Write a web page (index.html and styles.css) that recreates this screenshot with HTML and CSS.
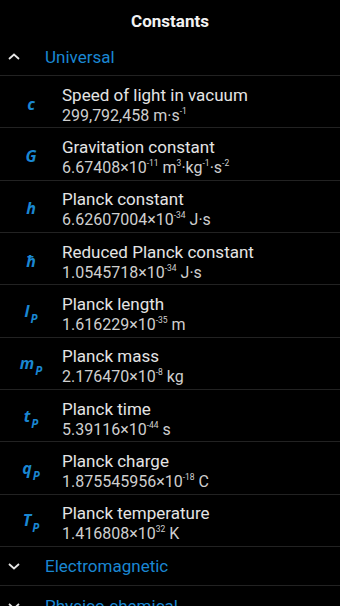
FILE: index.html
```html
<!DOCTYPE html>
<html>
<head>
<meta charset="utf-8">
<link rel="stylesheet" href="styles.css">
</head>
<body>
<div class="app">
  <div class="titlebar">Constants</div>
  <div class="group">
    <svg class="chev" width="14" height="10" viewBox="0 0 14 10"><polyline points="2,7 7,2.5 12,7" fill="none" stroke="#e6e6e6" stroke-width="1.8"/></svg>
    <span class="gname">Universal</span>
  </div>
  <div class="row">
    <div class="sym">c</div>
    <div class="txt"><div class="name">Speed of light in vacuum</div><div class="val">299,792,458 m·s<sup>-1</sup></div></div>
  </div>
  <div class="row">
    <div class="sym">G</div>
    <div class="txt"><div class="name">Gravitation constant</div><div class="val">6.67408×10<sup>-11</sup> m<sup>3</sup>·kg<sup>-1</sup>·s<sup>-2</sup></div></div>
  </div>
  <div class="row">
    <div class="sym">h</div>
    <div class="txt"><div class="name">Planck constant</div><div class="val">6.62607004×10<sup>-34</sup> J·s</div></div>
  </div>
  <div class="row">
    <div class="sym">ħ</div>
    <div class="txt"><div class="name">Reduced Planck constant</div><div class="val">1.0545718×10<sup>-34</sup> J·s</div></div>
  </div>
  <div class="row">
    <div class="sym">l<sub>P</sub></div>
    <div class="txt"><div class="name">Planck length</div><div class="val">1.616229×10<sup>-35</sup> m</div></div>
  </div>
  <div class="row">
    <div class="sym">m<sub>P</sub></div>
    <div class="txt"><div class="name">Planck mass</div><div class="val">2.176470×10<sup>-8</sup> kg</div></div>
  </div>
  <div class="row">
    <div class="sym">t<sub>P</sub></div>
    <div class="txt"><div class="name">Planck time</div><div class="val">5.39116×10<sup>-44</sup> s</div></div>
  </div>
  <div class="row">
    <div class="sym">q<sub>P</sub></div>
    <div class="txt"><div class="name">Planck charge</div><div class="val">1.875545956×10<sup>-18</sup> C</div></div>
  </div>
  <div class="row">
    <div class="sym">T<sub>P</sub></div>
    <div class="txt"><div class="name">Planck temperature</div><div class="val">1.416808×10<sup>32</sup> K</div></div>
  </div>
  <div class="group g2">
    <svg class="chev" width="14" height="10" viewBox="0 0 14 10"><polyline points="2,3 7,7.5 12,3" fill="none" stroke="#e6e6e6" stroke-width="1.8"/></svg>
    <span class="gname">Electromagnetic</span>
  </div>
  <div class="group g2">
    <svg class="chev" width="14" height="10" viewBox="0 0 14 10"><polyline points="2,3 7,7.5 12,3" fill="none" stroke="#e6e6e6" stroke-width="1.8"/></svg>
    <span class="gname">Physico-chemical</span>
  </div>
</div>
</body>
</html>
```
FILE: styles.css
```css
html, body {
  margin: 0;
  padding: 0;
  background: #000;
}
body {
  font-family: Roboto, "Liberation Sans", sans-serif;
  color: #e2e2e2;
  overflow: hidden;
}
.app {
  width: 340px;
  height: 606px;
  overflow: hidden;
  background: #000;
}
.titlebar {
  height: 36px;
  display: flex;
  align-items: center;
  justify-content: center;
  font-weight: 700;
  font-size: 17px;
  color: #f2f2f2;
  padding-top: 6px;
  box-sizing: border-box;
}
.group {
  height: 40px;
  box-sizing: border-box;
  border-bottom: 1px solid #222;
  display: flex;
  align-items: center;
  padding-left: 7px;
  padding-top: 2px;
}
.g2 {
  height: 39.5px;
  padding-top: 0;
}
.chev {
  display: block;
  width: 14px;
  height: 10px;
}
.gname {
  margin-left: 24px;
  color: #1a87d2;
  font-size: 17px;
  font-weight: 400;
}
.row {
  height: 52.33px;
  box-sizing: border-box;
  border-bottom: 1px solid #222;
  display: flex;
  align-items: center;
}
.sym {
  width: 62px;
  text-align: center;
  color: #1a87d2;
  font-family: "Noto Sans", Roboto, sans-serif;
  font-style: italic;
  font-weight: 700;
  font-size: 16px;
  padding-top: 4px;
  box-sizing: border-box;
}
.sym sub {
  font-size: 11.5px;
  vertical-align: -6px;
  margin-left: 1px;
}
.txt {
  display: flex;
  flex-direction: column;
  gap: 1px;
  padding-top: 7px;
}
.name {
  font-size: 17px;
  font-weight: 400;
  color: #e4e4e4;
  line-height: 20px;
}
.val {
  font-size: 16px;
  color: #cfcfcf;
  line-height: 20px;
}
.val sup {
  font-size: 8.5px;
  vertical-align: 7px;
  line-height: 0;
}
```
